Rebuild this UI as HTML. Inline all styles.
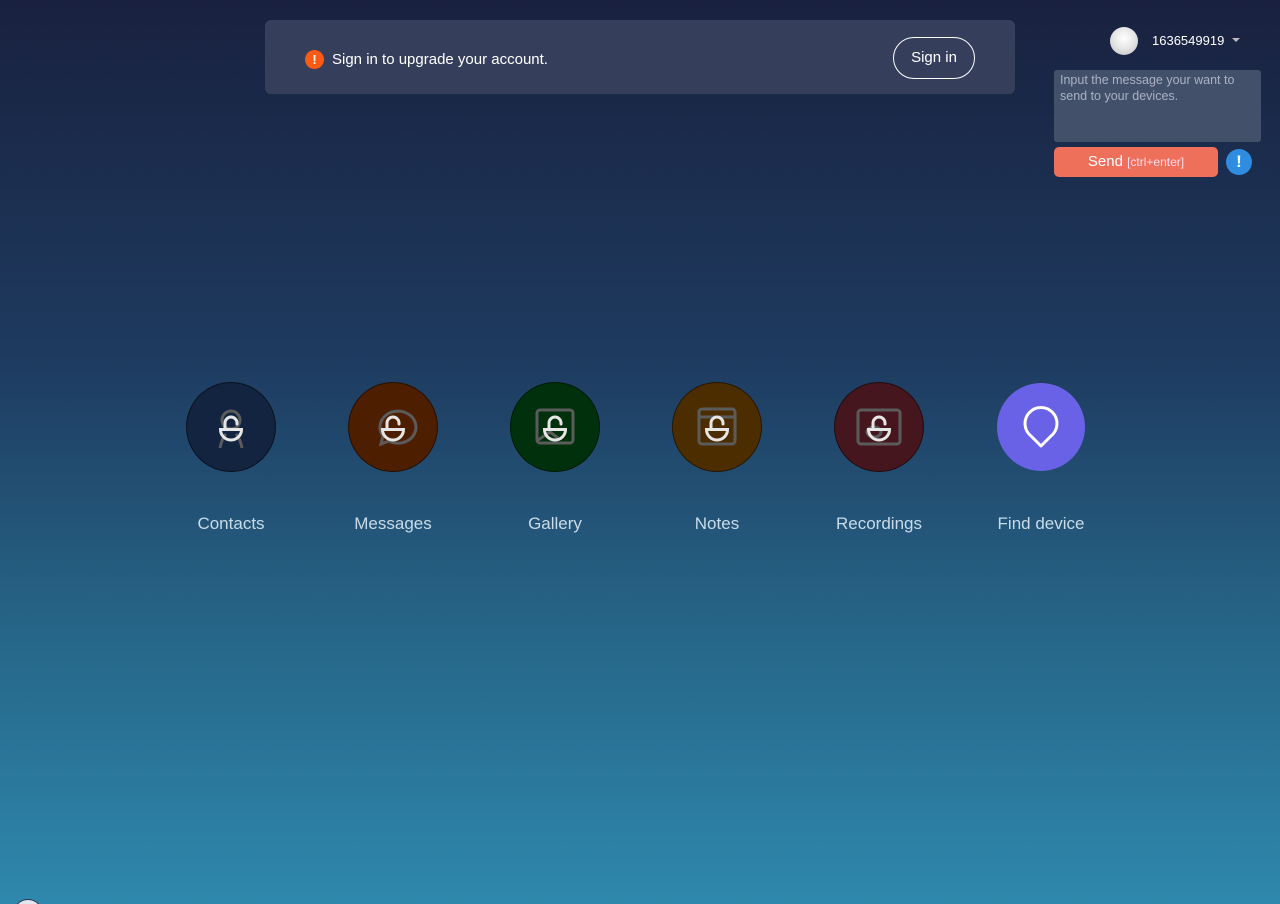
<!DOCTYPE html>
<html><head><meta charset="utf-8"><style>
*{margin:0;padding:0;box-sizing:border-box}
html,body{width:1280px;height:904px;overflow:hidden}
body{position:relative;font-family:"Liberation Sans","Noto Sans CJK SC",sans-serif;background:linear-gradient(to bottom,#19213f 0%,#1e3b60 40%,#266688 70%,#2e88ad 100%)}
.banner{position:absolute;left:265px;top:20px;width:750px;height:74px;background:#353f5c;border-radius:6px}
.banner .ic{position:absolute;left:40px;top:30px;width:19px;height:19px;border-radius:50%;background:#fa5a14;color:#fff;font-weight:bold;font-size:13px;text-align:center;line-height:19px}
.banner .t{position:absolute;left:67px;top:30px;color:#fff;font-size:15px;line-height:19px}
.banner .btn{position:absolute;left:628px;top:17px;width:82px;height:42px;border:1px solid #fff;border-radius:21px;color:#fff;font-size:15px;text-align:center;line-height:40px}
.av{position:absolute;left:1110px;top:27px;width:28px;height:28px;border-radius:50%;background:radial-gradient(circle at 50% 40%,#fff 0,#e8e8e8 45%,#bdbdbd 100%)}
.uid{position:absolute;left:1152px;top:33px;color:#fff;font-size:13px}
.caret{position:absolute;left:1232px;top:38px;border:4px solid transparent;border-top:4px solid #bbb}
.ta{position:absolute;left:1054px;top:70px;width:207px;height:72px;background:#435069;border-radius:3px;color:#aab2c2;font-size:12.5px;line-height:16px;padding:2px 6px}
.send{position:absolute;left:1054px;top:147px;width:164px;height:30px;background:#ef705a;border-radius:5px;color:#fff;text-align:center;font-size:15px;line-height:29px}
.send small{font-size:12px;color:#fde}
.info{position:absolute;left:1226px;top:149px;width:26px;height:26px;border-radius:50%;background:#2e8de0;color:#fff;font-weight:bold;text-align:center;line-height:26px;font-size:17px}
.app{position:absolute;top:382px;width:90px;height:90px;border-radius:50%;border:1px solid rgba(0,0,0,.5)}
.app svg{position:absolute;left:-1px;top:-1px}
.lbl{position:absolute;top:514px;width:160px;text-align:center;color:#c8dbe8;font-size:17px}
</style></head><body>
<div class="banner"><div class="ic">!</div><div class="t">Sign in to upgrade your account.</div><div class="btn">Sign in</div></div>
<div class="av"></div><div class="uid">1636549919</div><div class="caret"></div>
<div class="ta">Input the message your want to send to your devices.</div>
<div class="send">Send <small>[ctrl+enter]</small></div>
<div class="info">!</div>

<svg width="0" height="0" style="position:absolute"><defs>
<g id="lock" fill="none" stroke="#e6e6e6" stroke-width="3" stroke-linecap="round">
<path d="M39 47 V41 a6 6 0 0 1 12 0 v1"/>
<path d="M34.5 47.5 h21 a10.5 10.5 0 0 1 -21 0 z"/>
</g></defs></svg>

<div class="app" style="left:186px;background:#12243f"><svg width="90" height="90"><g fill="none" stroke="#5b5b5b" stroke-width="3"><circle cx="45" cy="38" r="9"/><path d="M34 66 q2-10 6-14 M56 66 q-2-10-6-14"/></g><use href="#lock"/></svg></div>
<div class="app" style="left:348px;background:#4d1e00"><svg width="90" height="90"><path d="M33 62 l2-8 a18 16 0 1 1 6 5 z" fill="none" stroke="#5b5b5b" stroke-width="3"/><use href="#lock"/></svg></div>
<div class="app" style="left:510px;background:#00310c"><svg width="90" height="90"><rect x="27" y="28" width="36" height="33" rx="3" fill="none" stroke="#5b5b5b" stroke-width="3"/><path d="M28 58 l12-8 l8 6" fill="none" stroke="#5b5b5b" stroke-width="3"/><use href="#lock"/></svg></div>
<div class="app" style="left:672px;background:#4c2d00"><svg width="90" height="90"><rect x="27" y="27" width="36" height="35" rx="3" fill="none" stroke="#5b5b5b" stroke-width="3"/><path d="M27 35 h36" stroke="#5b5b5b" stroke-width="3"/><use href="#lock"/></svg></div>
<div class="app" style="left:834px;background:#45161d"><svg width="90" height="90"><rect x="24" y="28" width="42" height="34" rx="3" fill="none" stroke="#5b5b5b" stroke-width="3"/><ellipse cx="40" cy="50" rx="7" ry="5" fill="none" stroke="#5b5b5b" stroke-width="3"/><use href="#lock"/></svg></div>
<div class="app" style="left:997px;top:383px;width:88px;height:88px;border:none;background:#6962e6"><svg width="88" height="88" style="left:0;top:0"><path d="M44 63 L34 53 a16 16 0 1 1 20 0 z" fill="none" stroke="#fff" stroke-width="3" stroke-linejoin="round"/></svg></div>

<div class="lbl" style="left:151px">Contacts</div>
<div class="lbl" style="left:313px">Messages</div>
<div class="lbl" style="left:475px">Gallery</div>
<div class="lbl" style="left:637px">Notes</div>
<div class="lbl" style="left:799px">Recordings</div>
<div class="lbl" style="left:961px">Find device</div>
<div style="position:absolute;left:13px;top:899px;width:30px;height:30px;border-radius:50%;background:#dfe6ee;border:1px solid #335"></div>
</body></html>
